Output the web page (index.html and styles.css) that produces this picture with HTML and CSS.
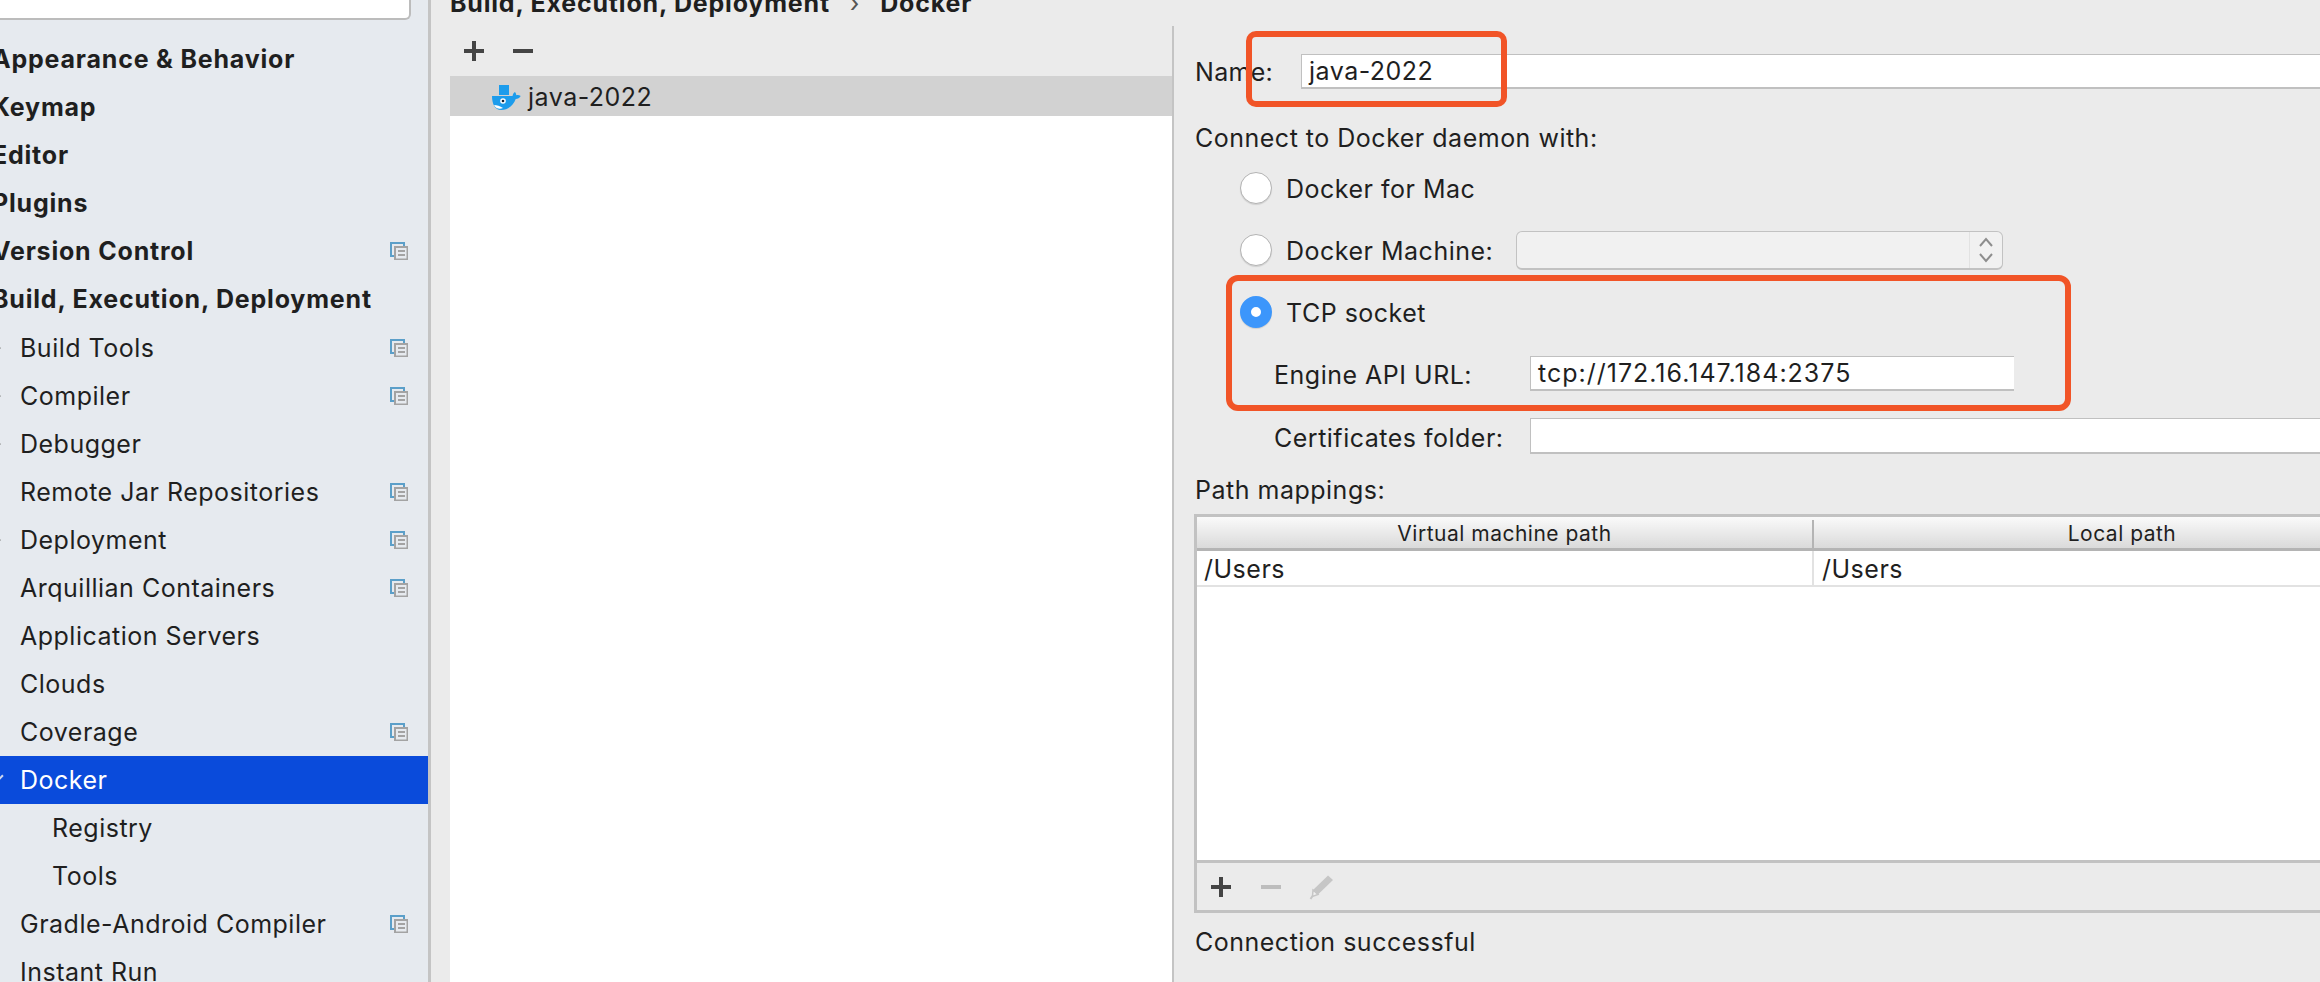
FILE: index.html
```html
<!DOCTYPE html>
<html lang="en">
<head>
    <meta charset="UTF-8">
    <title>Preferences - Docker</title>
    <link rel="stylesheet" href="styles.css">
</head>
<body>
    <svg class="defs" width="0" height="0">
        <symbol id="copy" viewBox="0 0 18 18">
            <path d="M1 1h13v13H1z" fill="none" stroke="#5b9fc9" stroke-width="2"/>
            <path d="M5 5h13v13H5z" fill="#e6eaef"/>
            <path d="M5 5h12.500v12.500H5z" fill="none" stroke="#a3a3a3" stroke-width="2"/>
            <path d="M8 9h7M8 13h7" stroke="#a3a3a3" stroke-width="2"/>
        </symbol>
    </svg>
    <div class="app">
        <nav class="sidebar">
            <div class="search"></div>
            <ul class="tree">
                <li class="row top">Appearance &amp; Behavior</li>
                <li class="row top">Keymap</li>
                <li class="row top">Editor</li>
                <li class="row top">Plugins</li>
                <li class="row top">Version Control<svg class="copy"><use href="#copy"/></svg></li>
                <li class="row top">Build, Execution, Deployment</li>
                <li class="row child"><i class="arrow"></i>Build Tools<svg class="copy"><use href="#copy"/></svg></li>
                <li class="row child"><i class="arrow"></i>Compiler<svg class="copy"><use href="#copy"/></svg></li>
                <li class="row child"><i class="arrow"></i>Debugger</li>
                <li class="row child">Remote Jar Repositories<svg class="copy"><use href="#copy"/></svg></li>
                <li class="row child"><i class="arrow"></i>Deployment<svg class="copy"><use href="#copy"/></svg></li>
                <li class="row child">Arquillian Containers<svg class="copy"><use href="#copy"/></svg></li>
                <li class="row child">Application Servers</li>
                <li class="row child">Clouds</li>
                <li class="row child">Coverage<svg class="copy"><use href="#copy"/></svg></li>
                <li class="row child selected"><i class="arrow"></i>Docker</li>
                <li class="row grandchild">Registry</li>
                <li class="row grandchild">Tools</li>
                <li class="row child">Gradle-Android Compiler<svg class="copy"><use href="#copy"/></svg></li>
                <li class="row child">Instant Run</li>
            </ul>
        </nav>
        <main class="main">
            <div class="crumbs">Build, Execution, Deployment<span class="crumb-sep">›</span>Docker</div>
            <div class="panes">
                <section class="servers">
                    <div class="list-tools">
                        <span class="plus"></span>
                        <span class="minus"></span>
                    </div>
                    <div class="server-list">
                        <div class="server-row">
                            <svg class="whale" width="29" height="25" viewBox="0 0 29 25">
                                <path d="M7 0h10v10H7z" fill="#1c9cec"/>
                                <path d="M0 11h20.500c.5-2.500 1.500-3.500 2.500-4 .8 1 1.200 2.200 1.300 3.200 1.400-.4 3-.2 4.400.8-1 2-3 3-5 3-2 5.500-7 11-14.500 11C3 25 0 19 0 11z" fill="#1c9cec"/>
                                <circle cx="11" cy="16" r="2.800" fill="#fff"/>
                                <circle cx="11" cy="16" r="1.300" fill="#123"/>
                                <path d="M2 20c3 0 6 1 9 3-3 1.500-7 1-9-3z" fill="#fff"/>
                            </svg>
                            java-2022
                        </div>
                    </div>
                </section>
                <section class="config">
                    <div class="name-row">
                        <label class="name-label">Name:</label>
                        <div class="field name-field">java-2022</div>
                    </div>
                    <div class="heading connect-heading">Connect to Docker daemon with:</div>
                    <div class="radio-row"><span class="radio"></span><span class="radio-text">Docker for Mac</span></div>
                    <div class="radio-row">
                        <span class="radio"></span><span class="radio-text machine-text">Docker Machine:</span>
                        <div class="combo">
                            <div class="stepper">
                                <svg width="16" height="26" viewBox="0 0 16 26">
                                    <path d="M2 9l6-7 6 7M2 17l6 7 6-7" fill="none" stroke="#8d8d8d" stroke-width="2"/>
                                </svg>
                            </div>
                        </div>
                    </div>
                    <div class="radio-row"><span class="radio checked"></span><span class="radio-text">TCP socket</span></div>
                    <div class="sub-row engine-row">
                        <label class="sub-label">Engine API URL:</label>
                        <div class="field url-field">tcp://172.16.147.184:2375</div>
                    </div>
                    <div class="sub-row certs-row">
                        <label class="sub-label">Certificates folder:</label>
                        <div class="field certs-field"></div>
                    </div>
                    <div class="heading mappings-heading">Path mappings:</div>
                    <div class="table">
                        <div class="table-head">
                            <div class="th">Virtual machine path</div>
                            <div class="th">Local path</div>
                        </div>
                        <div class="table-row">
                            <div class="td">/Users</div>
                            <div class="td">/Users</div>
                        </div>
                        <div class="table-space"></div>
                        <div class="table-tools">
                            <span class="plus"></span>
                            <span class="minus off"></span>
                            <svg class="pencil" width="26" height="26" viewBox="0 0 26 26">
                                <path d="M19 1.500l5 4.500L9 20.500 4 16z" fill="#c6c6c6"/>
                                <path d="M4 16l5 4.500-5.500 2z" fill="#f0f0f0" stroke="#c6c6c6" stroke-width="1.500"/>
                                <path d="M1.500 25l2-3" stroke="#c6c6c6" stroke-width="2"/>
                            </svg>
                        </div>
                    </div>
                    <div class="heading status">Connection successful</div>
                </section>
            </div>
        </main>
    </div>
    <div class="callout callout-name"></div>
    <div class="callout callout-tcp"></div>
</body>
</html>
```

FILE: styles.css
```css
* {
    box-sizing: border-box;
}
html, body {
    margin: 0;
    height: 100%;
    overflow: hidden;
}
body {
    font-family: Inter, "Noto Sans", sans-serif;
    font-size: 25px;
    letter-spacing: 0.5px;
    color: #1f1f1f;
    background-color: #ebebeb;
}
.defs {
    position: absolute;
}
.app {
    display: flex;
    height: 982px;
    overflow: hidden;
}

/* settings tree */
.sidebar {
    flex: 0 0 431px;
    background-color: #e6eaef;
    border-right: 3px solid #c4c4c4;
    overflow: hidden;
}
.search {
    width: 411px;
    height: 20px;
    background-color: #fff;
    border-right: 2px solid #bcbcbc;
    border-bottom: 2px solid #bcbcbc;
    border-bottom-right-radius: 6px;
}
.tree {
    list-style-type: none;
    margin: 16px 0 0;
    padding: 0;
}
.row {
    display: flex;
    align-items: center;
    position: relative;
    height: 48px;
    white-space: nowrap;
}
.top {
    font-weight: 700;
    letter-spacing: 0.8px;
    text-indent: -8px;
    padding-bottom: 2px;
}
.child {
    padding-left: 20px;
}
.grandchild {
    padding-left: 52px;
}
.selected {
    background-color: #0a4bdb;
    color: #fff;
}
.copy {
    width: 18px;
    height: 18px;
    margin-left: auto;
    margin-right: 20px;
}
.arrow {
    position: absolute;
    left: -9px;
    top: 20px;
    width: 8px;
    height: 8px;
    border-right: 2px solid #8a8a8a;
    border-bottom: 2px solid #8a8a8a;
    transform: rotate(-45deg);
}
.selected .arrow {
    left: -6px;
    top: 16px;
    border-color: #cfd8ee;
    transform: rotate(45deg);
}

/* right side */
.main {
    flex: 1;
    min-width: 0;
    padding-left: 19px;
    display: flex;
    flex-direction: column;
}
.crumbs {
    flex: none;
    height: 40px;
    margin-top: -14px;
    line-height: 34px;
    font-weight: 700;
    letter-spacing: 0.8px;
    white-space: nowrap;
}
.crumb-sep {
    font-weight: 400;
    color: #555;
    margin: 0 20px;
}
.panes {
    display: flex;
    flex: 1;
    min-height: 0;
}
.servers {
    flex: 0 0 722px;
    display: flex;
    flex-direction: column;
}
.list-tools {
    flex: none;
    height: 50px;
    display: flex;
    align-items: center;
    padding-left: 14px;
    gap: 29px;
}
.plus, .minus {
    display: block;
    position: relative;
    width: 20px;
    height: 20px;
    flex: none;
}
.plus::before, .minus::before {
    content: "";
    position: absolute;
    left: 0;
    right: 0;
    top: 8px;
    height: 4px;
    background-color: #444;
}
.plus::after {
    content: "";
    position: absolute;
    top: 0;
    bottom: 0;
    left: 8px;
    width: 4px;
    background-color: #444;
}
.off::before {
    background-color: #bdbdbd;
}
.server-list {
    flex: 1;
    background-color: #fff;
}
.server-row {
    display: flex;
    align-items: center;
    gap: 7px;
    height: 40px;
    padding-left: 42px;
    padding-top: 1px;
    background-color: #d2d2d2;
}
.whale {
    flex: none;
    margin-top: 1px;
}

/* docker form */
.config {
    flex: 1;
    min-width: 0;
    border-left: 2px solid #c4c4c4;
    padding-left: 21px;
}
.field {
    background-color: #fff;
    border: 1px solid #c0c0c0;
    border-width: 1px 0 2px 1px;
    padding-left: 7px;
    line-height: 33px;
}
.name-row {
    display: flex;
    align-items: center;
    margin-top: 28px;
}
.name-label {
    flex: 0 0 106px;
    letter-spacing: 0.3px;
}
.name-field {
    flex: 1;
    height: 35px;
    margin-right: -4px;
}
.heading {
    height: 40px;
    line-height: 42px;
}
.connect-heading {
    margin-top: 28px;
}
.radio-row {
    display: flex;
    align-items: center;
    height: 62px;
    padding-left: 45px;
}
.radio {
    width: 32px;
    height: 32px;
    margin-right: 14px;
    border-radius: 50%;
    background-color: #fff;
    border: 1px solid #b3b3b3;
    box-shadow: 0 1px 1px rgba(0, 0, 0, 0.12);
    flex: none;
}
.radio.checked {
    background-color: #fff;
    border: 11px solid #3c96fb;
}
.radio-text {
    padding-top: 2px;
}
.machine-text {
    flex: 0 0 230px;
    white-space: nowrap;
}
.combo {
    display: flex;
    justify-content: flex-end;
    width: 487px;
    height: 39px;
    background-color: #f1f1f1;
    border: 1px solid #c2c2c2;
    border-bottom-width: 2px;
    border-radius: 6px;
}
.stepper {
    width: 33px;
    border-left: 1px solid #e2e2e2;
    display: flex;
    align-items: center;
    justify-content: center;
}
.sub-row {
    display: flex;
    align-items: center;
    padding-left: 79px;
}
.sub-label {
    flex: 0 0 256px;
    white-space: nowrap;
    padding-top: 3px;
}
.engine-row {
    margin-top: 13px;
}
.url-field {
    width: 484px;
    height: 35px;
    letter-spacing: 1px;
}
.certs-row {
    margin-top: 27px;
}
.certs-field {
    flex: 1;
    height: 36px;
    margin-right: -4px;
}
.mappings-heading {
    margin-top: 15px;
}
.table {
    margin: 5px -4px 0 -1px;
    height: 399px;
    border: 3px solid #c2c2c2;
    display: flex;
    flex-direction: column;
    overflow: hidden;
}
.table-head, .table-row {
    display: grid;
    grid-template-columns: 615px 620px;
    flex: none;
}
.table-head {
    height: 34px;
    border-bottom: 3px solid #b4b4b4;
    background: linear-gradient(#fafafa, #dadada);
}
.th {
    font-size: 21px;
    line-height: 34px;
    text-align: center;
    position: relative;
}
.th + .th::before {
    content: "";
    position: absolute;
    left: 0;
    top: 3px;
    bottom: 2px;
    width: 2px;
    background-color: #b4b4b4;
}
.table-row {
    height: 36px;
    background-color: #fff;
    border-bottom: 2px solid #e2e2e2;
}
.td {
    line-height: 36px;
    padding-left: 7px;
}
.td + .td {
    border-left: 2px solid #e2e2e2;
    padding-left: 8px;
}
.table-space {
    flex: 1;
    background-color: #fff;
}
.table-tools {
    flex: none;
    height: 50px;
    display: flex;
    align-items: center;
    gap: 30px;
    padding-left: 14px;
    border-top: 3px solid #c2c2c2;
}
.pencil {
    flex: none;
    margin-left: -2px;
}
.status {
    margin-top: 8px;
}

/* red annotation boxes drawn over the screenshot */
.callout {
    position: absolute;
    border: 6px solid #f15427;
    border-radius: 10px;
}
.callout-name {
    left: 1246px;
    top: 31px;
    width: 261px;
    height: 76px;
}
.callout-tcp {
    left: 1226px;
    top: 275px;
    width: 845px;
    height: 136px;
    border-radius: 12px;
}
```
